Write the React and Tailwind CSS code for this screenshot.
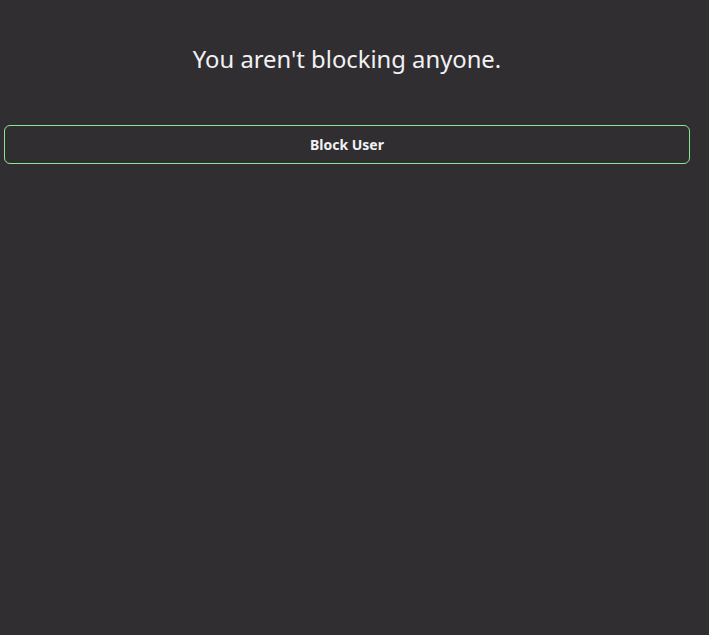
import React from 'react';

const App = () => {
  return (
    <div className="min-h-[635px] w-[709px] bg-[#302e31] font-['Noto_Sans',sans-serif] text-[#f2f2f4]">
      <div className="w-[694px] px-1">
        <h1 className="pt-[41px] text-center text-[23.8px] leading-[36px] font-normal">You aren't blocking anyone.</h1>
        <button className="mt-[48px] flex h-[39px] w-full items-center justify-center rounded-[6px] border border-[#86e890] text-[14px] font-bold text-[#f2f2f4]">
          Block User
        </button>
      </div>
    </div>
  );
};

export default App;
